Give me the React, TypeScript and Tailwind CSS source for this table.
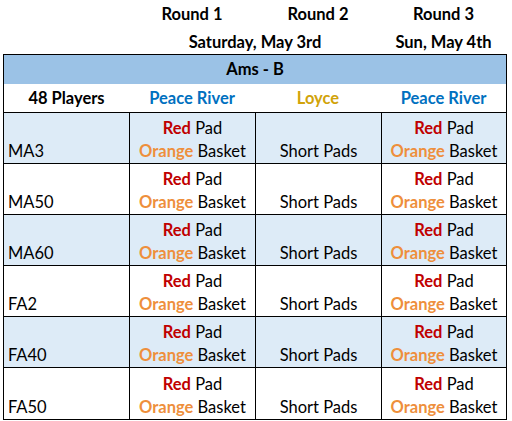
const rows = ['MA3', 'MA50', 'MA60', 'FA2', 'FA40', 'FA50'];

function PadCell() {
  return (
    <div className="flex flex-col items-center justify-end border-l border-black">
      <div className="leading-[23px]">
        <span className="font-bold text-[#c00000]">Red</span> Pad
      </div>
      <div className="leading-[23px]">
        <span className="font-bold text-[#ee8f3c]">Orange</span> Basket
      </div>
    </div>
  );
}

export default function App() {
  return (
    <div className="w-[512px] h-[421px] bg-white text-black text-[16.5px]" style={{ fontFamily: 'Lato, "Liberation Sans", sans-serif' }}>
      {/* headers above the table */}
      <div className="ml-[4px] w-[502px] grid grid-cols-[125px_126px_126px_125px] font-bold">
        <div className="h-[28px]" />
        <div className="h-[28px] flex items-center justify-center">Round 1</div>
        <div className="h-[28px] flex items-center justify-center">Round 2</div>
        <div className="h-[28px] flex items-center justify-center">Round 3</div>
        <div className="h-[26px]" />
        <div className="col-span-2 h-[26px] flex items-center justify-center pt-[2px]">Saturday, May 3rd</div>
        <div className="h-[26px] flex items-center justify-center pt-[2px]">Sun, May 4th</div>
      </div>

      <div className="ml-[3px] w-[504px] border border-black">
        <div className="h-[29px] bg-[#9bc2e6] flex items-center justify-center font-bold">Ams - B</div>
        <div className="grid grid-cols-[125px_126px_126px_125px] h-[29px] border-b border-black font-bold">
          <div className="flex items-end justify-center pb-[2px] leading-[23px]">48 Players</div>
          <div className="flex items-end justify-center pb-[2px] leading-[23px] text-[#0070c0]">Peace River</div>
          <div className="flex items-end justify-center pb-[2px] leading-[23px] text-[#d1a30a]">Loyce</div>
          <div className="flex items-end justify-center pb-[2px] leading-[23px] text-[#0070c0]">Peace River</div>
        </div>
        {rows.map((label, i) => (
          <div
            key={label}
            className={`grid grid-cols-[125px_126px_126px_125px] h-[51px] ${i < rows.length - 1 ? 'border-b border-black' : ''} ${i % 2 === 0 ? 'bg-[#ddebf7]' : 'bg-white'}`}
          >
            <div className="flex items-end pl-[4px] leading-[23px]">{label}</div>
            <PadCell />
            <div className="flex items-end justify-center border-l border-black leading-[23px]">Short Pads</div>
            <PadCell />
          </div>
        ))}
      </div>
    </div>
  );
}
